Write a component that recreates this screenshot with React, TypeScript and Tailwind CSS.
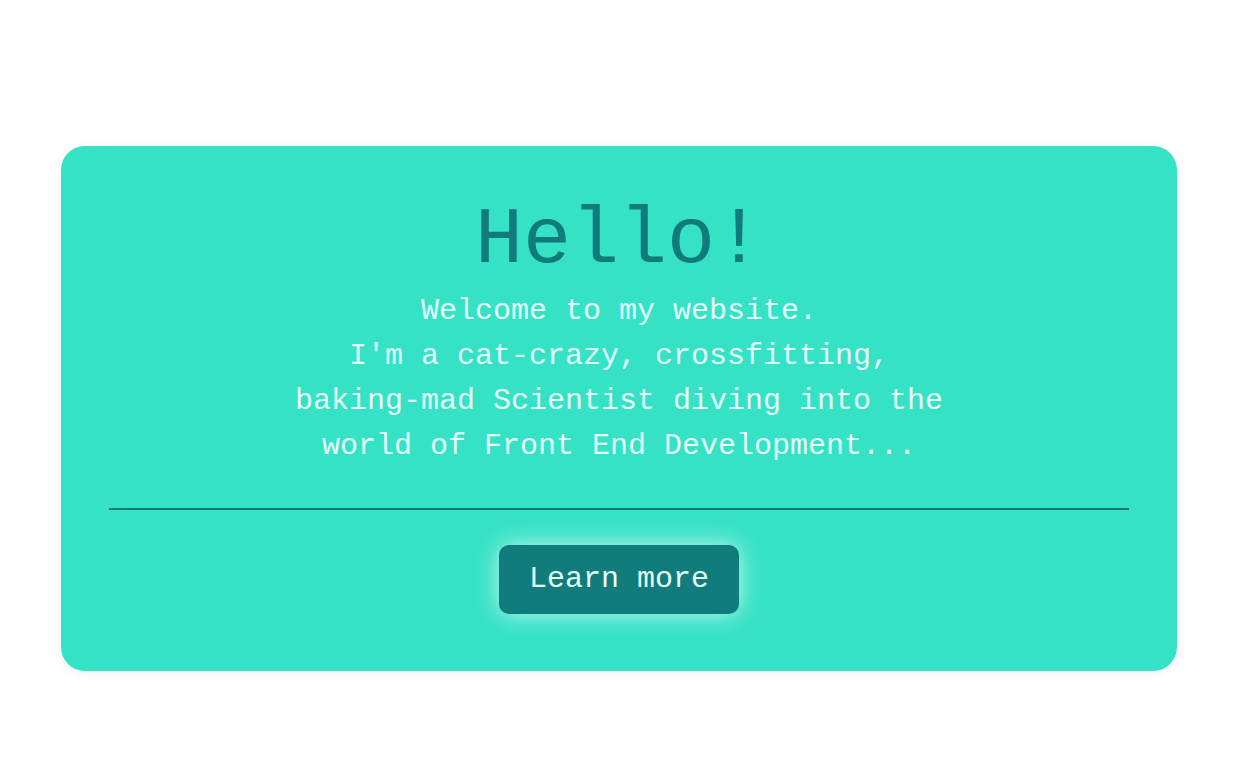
export default function App() {
  return (
    <div
      className="min-h-[784px] bg-white pl-[61px] pt-[146px]"
      style={{ fontFamily: '"Liberation Mono", "Courier New", monospace' }}
    >
      <div className="flex w-[1116px] flex-col items-center rounded-[24px] bg-[#35e2c6] pt-[55px] pb-[57px] shadow-[0_2px_12px_rgba(0,0,0,0.06)]">
        <h1 className="text-[80px] leading-[80px] text-[#117a7a]">Hello!</h1>
        <p className="mt-[8px] text-center text-[30px] leading-[45px] text-[#e4fff7]">
          Welcome to my website.
          <br />
          I'm a cat-crazy, crossfitting,
          <br />
          baking-mad Scientist diving into the
          <br />
          world of Front End Development...
        </p>
        <div className="mt-[39px] h-[2px] w-[1020px] bg-[#127575]" />
        <button className="mt-[35px] h-[69px] w-[240px] rounded-[10px] bg-[#107c7c] text-[30px] text-[#e4fff7] shadow-[0_0_24px_rgba(255,255,255,0.7)]">
          Learn more
        </button>
      </div>
    </div>
  );
}
